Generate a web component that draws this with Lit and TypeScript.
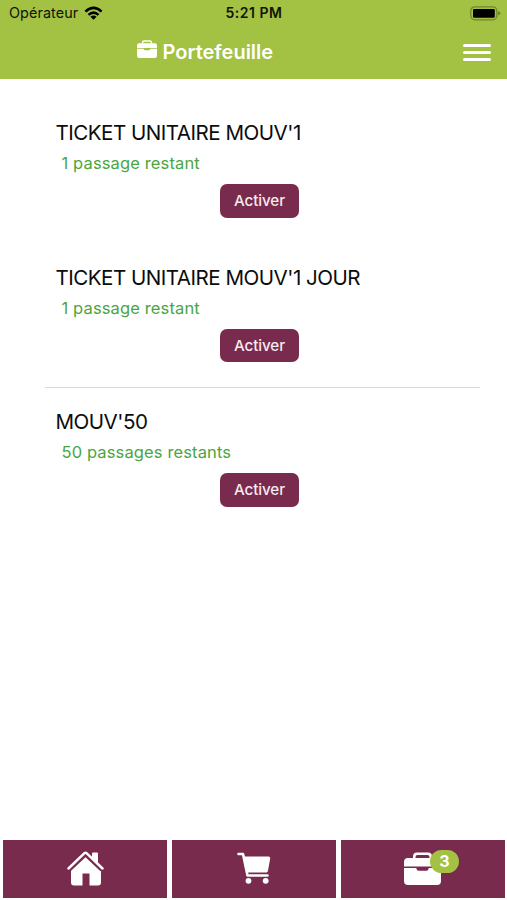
import { LitElement, html, css, svg } from "lit";
import { customElement, property } from "lit/decorators.js";

interface Ticket {
  name: string;
  remaining: string;
  divided?: boolean;
}

const tickets: Ticket[] = [
  { name: "TICKET UNITAIRE MOUV'1", remaining: "1 passage restant" },
  { name: "TICKET UNITAIRE MOUV'1 JOUR", remaining: "1 passage restant", divided: true },
  { name: "MOUV'50", remaining: "50 passages restants" },
];

const briefcase = svg`
  <path fill-rule="evenodd" d="M9 6V4.500Q9 0.500 13 0.500H24Q28 0.500 28 4.500V6H33Q37 6 37 10V14.500H0V10Q0 6 4 6ZM11.500 6H25.500V5Q25.500 3 23.500 3H13.500Q11.500 3 11.500 5Z"/>
  <path d="M0 16H12.200L13 18Q13.400 18.800 14.500 18.800H22.500Q23.600 18.800 24 18L24.800 16H37V29Q37 33 33 33H4Q0 33 0 29Z"/>`;

@customElement("status-bar")
export class StatusBar extends LitElement {
  static styles = css`
    :host {
      display: grid;
      grid-template-columns: 1fr auto 1fr;
      align-items: center;
      height: 27px;
      padding: 0 6px 0 9px;
      color: #101408;
    }
    .carrier { display: flex; align-items: center; gap: 6px; font-size: 14.400px; line-height: 18px; letter-spacing: 0.080px; margin-top: -1px; }
    .time { font-size: 14px; font-weight: 600; line-height: 18px; letter-spacing: 0.500px; margin: -1px 2px 0 0; }
    .battery { justify-self: end; display: block; }
    .wifi { display: block; }
  `;
  render() {
    return html`
      <div class="carrier">
        <span>Opérateur</span>
        <svg class="wifi" width="19" height="15" viewBox="0 0 20 15">
          <g fill="none" stroke="#000" stroke-width="2.700">
            <path d="M1.500 5.500Q10 -2.200 18.500 5.500"/>
            <path d="M4.700 8.900Q10 4.100 15.300 8.900"/>
          </g>
          <path d="M6.700 10.900Q10 8.200 13.300 10.900L10 14.200Z"/>
        </svg>
      </div>
      <span class="time">5:21 PM</span>
      <svg class="battery" width="31" height="15" viewBox="0 0 31 15">
        <rect x="0.800" y="0.800" width="26" height="13" rx="4" fill="none" stroke="#71882c" stroke-width="1.300"/>
        <rect x="3" y="3" width="21.800" height="8.700" rx="1.200"/>
        <path d="M28 5Q30.500 6 30.500 7.300T28 9.600Z" fill="#71882c"/>
      </svg>
    `;
  }
}

@customElement("ticket-card")
export class TicketCard extends LitElement {
  @property({ attribute: false }) ticket!: Ticket;
  static styles = css`
    :host {
      display: flex;
      flex-direction: column;
      box-sizing: border-box;
      height: 144.600px;
      padding: 21px 10px 0;
    }
    .name { margin: 0 0 0 0.500px; font-size: 20.600px; font-weight: 400; line-height: 26px; color: #0c0c0c; white-space: nowrap; letter-spacing: -0.520px; }
    .remaining { margin: 5px 0 0 6.500px; font-size: 16.500px; line-height: 24px; color: #4aa63f; letter-spacing: 0.130px; }
    button {
      margin: 9px 6px 0 0;
      align-self: center;
      width: 79px;
      height: 33.500px;
      padding: 0;
      border: 0;
      border-radius: 7px;
      background: #782b4d;
      color: #f7e9ef;
      font: 500 15.200px Inter, sans-serif;
      letter-spacing: -0.100px;
    }
  `;
  render() {
    return html`
      <h2 class="name">${this.ticket.name}</h2>
      <p class="remaining">${this.ticket.remaining}</p>
      <button>Activer</button>
    `;
  }
}

@customElement("tab-bar")
export class TabBar extends LitElement {
  static styles = css`
    :host { display: grid; grid-template-columns: repeat(3, 1fr); gap: 5px; height: 58.500px; padding: 0 2.500px 2px 3.300px; }
    .tab { display: flex; align-items: center; justify-content: center; background: #782b4d; }
    svg { display: block; fill: #fff; }
    .wallet { position: relative; margin: -1px 1px 0 0; }
    .cart { margin-top: -2px; }
    .badge {
      position: absolute;
      left: 26px;
      top: -2px;
      width: 29.500px;
      height: 23.500px;
      border-radius: 12px;
      background: #a3c143;
      color: #fff;
      font-size: 16px;
      font-weight: 700;
      line-height: 23.500px;
      text-align: center;
    }
  `;
  render() {
    return html`
      <div class="tab">
        <svg width="37" height="35" viewBox="0 0 37 35">
          <path d="M18.500 5L34 19.500V31.500Q34 34.500 31 34.500H22.500V22.500H15.500V34.500H7Q4 34.500 4 31.500V19Z"/>
          <path d="M1.500 18L17.200 3.200Q18.500 2 19.800 3.200L35.500 18" fill="none" stroke="#782b4d" stroke-width="6"/>
          <path d="M25 2.500Q25 1.500 26 1.500H30Q31 1.500 31 2.500V13L25 7.500Z"/>
          <path d="M1.500 17.500L17.200 2.300Q18.500 1.100 19.800 2.300L35.500 17.500" fill="none" stroke="#fff" stroke-width="2.500" stroke-linecap="round"/>
        </svg>
      </div>
      <div class="tab">
        <svg class="cart" width="34" height="32" viewBox="0 0 34 32">
          <path d="M1.500 2H6L10.500 23.500H30.500" fill="none" stroke="#fff" stroke-width="2.600" stroke-linecap="round" stroke-linejoin="round"/>
          <path d="M6.500 4.500H31.500Q33.500 4.500 33.200 6.500L31 18.500Q30.700 20.500 29.500 20.500H10Z"/>
          <circle cx="11.500" cy="28.800" r="2.900"/>
          <circle cx="28.700" cy="28.800" r="2.900"/>
        </svg>
      </div>
      <div class="tab">
        <div class="wallet">
          <svg width="37" height="33" viewBox="0 0 37 33">${briefcase}</svg>
          <span class="badge">3</span>
        </div>
      </div>
    `;
  }
}

@customElement("app-root")
export class AppRoot extends LitElement {
  static styles = css`
    :host {
      display: flex;
      flex-direction: column;
      height: 900px;
      overflow: hidden;
      background: #fff;
      font-family: Inter, "Liberation Sans", sans-serif;
    }
    header { flex: none; height: 79px; background: #a3c143; }
    .title-bar {
      display: grid;
      grid-template-columns: 1fr auto;
      align-items: center;
      height: 50px;
      padding: 0 16px 0 137px;
      color: #fff;
    }
    h1 { display: flex; align-items: center; gap: 5.500px; margin: 0; font-size: 20px; font-weight: 600; line-height: 28px; letter-spacing: -0.020px; }
    h1 svg { fill: #fff; margin-top: -6px; }
    .menu { display: flex; flex-direction: column; gap: 4.300px; width: 28.500px; margin-top: 1px; }
    .menu i { height: 2.800px; border-radius: 1.500px; background: #fff; }
    main { flex: 1; padding: 20px 27px 0 45px; }
    .divided { border-bottom: 1px solid #dce2b4; }
  `;
  render() {
    return html`
      <header>
        <status-bar></status-bar>
        <div class="title-bar">
          <h1>
            <svg width="20" height="18" viewBox="0 0 37 33" preserveAspectRatio="none">${briefcase}</svg>
            <span>Portefeuille</span>
          </h1>
          <div class="menu"><i></i><i></i><i></i></div>
        </div>
      </header>
      <main>
        ${tickets.map((t) => html`<ticket-card class=${t.divided ? "divided" : ""} .ticket=${t}></ticket-card>`)}
      </main>
      <tab-bar></tab-bar>
    `;
  }
}
